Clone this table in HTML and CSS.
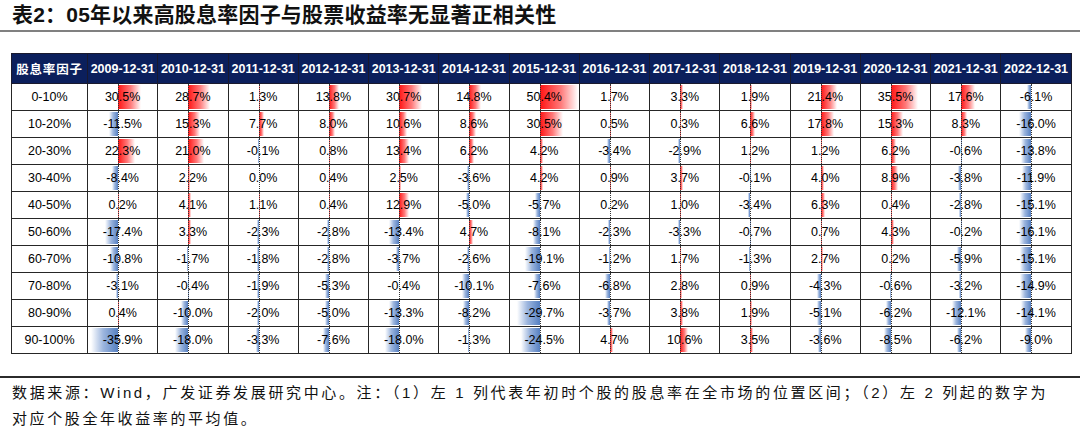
FILE: index.html
```html
<!DOCTYPE html>
<html lang="zh-CN">
<head>
<meta charset="utf-8">
<title>表2</title>
<link rel="stylesheet" href="styles.css">
</head>
<body>
<header class="title"><h1>表2：05年以来高股息率因子与股票收益率无显著正相关性</h1></header>
<section class="table-wrap">
<table class="grid">
<colgroup><col class="c0"><col class="cd"><col class="cd"><col class="cd"><col class="cd"><col class="cd"><col class="cd"><col class="cd"><col class="cd"><col class="cd"><col class="cd"><col class="cd"><col class="cd"><col class="cd"><col class="cd"></colgroup>
<thead>
<tr><th class="f">股息率因子</th><th>2009-12-31</th><th>2010-12-31</th><th>2011-12-31</th><th>2012-12-31</th><th>2013-12-31</th><th>2014-12-31</th><th>2015-12-31</th><th>2016-12-31</th><th>2017-12-31</th><th>2018-12-31</th><th>2019-12-31</th><th>2020-12-31</th><th>2021-12-31</th><th>2022-12-31</th></tr>
</thead>
<tbody>
<tr><td class="k">0-10%</td>
<td class="d"><i class="b p" style="width:23.2px"></i><span>30.5%</span></td>
<td class="d"><i class="b p" style="width:21.8px"></i><span>28.7%</span></td>
<td class="d"><i class="b p" style="width:1px"></i><span>1.3%</span></td>
<td class="d"><i class="b p" style="width:10.5px"></i><span>13.8%</span></td>
<td class="d"><i class="b p" style="width:23.3px"></i><span>30.7%</span></td>
<td class="d"><i class="b p" style="width:11.2px"></i><span>14.8%</span></td>
<td class="d"><i class="b p" style="width:38.3px"></i><span>50.4%</span></td>
<td class="d"><i class="b p" style="width:1.3px"></i><span>1.7%</span></td>
<td class="d"><i class="b p" style="width:2.5px"></i><span>3.3%</span></td>
<td class="d"><i class="b p" style="width:1.4px"></i><span>1.9%</span></td>
<td class="d"><i class="b p" style="width:16.3px"></i><span>21.4%</span></td>
<td class="d"><i class="b p" style="width:27px"></i><span>35.5%</span></td>
<td class="d"><i class="b p" style="width:13.4px"></i><span>17.6%</span></td>
<td class="d"><i class="b n" style="width:4.6px"></i><span>-6.1%</span></td></tr>
<tr><td class="k">10-20%</td>
<td class="d"><i class="b n" style="width:8.7px"></i><span>-11.5%</span></td>
<td class="d"><i class="b p" style="width:11.6px"></i><span>15.3%</span></td>
<td class="d"><i class="b p" style="width:5.9px"></i><span>7.7%</span></td>
<td class="d"><i class="b p" style="width:6.1px"></i><span>8.0%</span></td>
<td class="d"><i class="b p" style="width:8.1px"></i><span>10.6%</span></td>
<td class="d"><i class="b p" style="width:6.5px"></i><span>8.6%</span></td>
<td class="d"><i class="b p" style="width:23.2px"></i><span>30.5%</span></td>
<td class="d"><i class="b p" style="width:0.4px"></i><span>0.5%</span></td>
<td class="d"><i class="b p" style="width:0.2px"></i><span>0.3%</span></td>
<td class="d"><i class="b p" style="width:5px"></i><span>6.6%</span></td>
<td class="d"><i class="b p" style="width:13.5px"></i><span>17.8%</span></td>
<td class="d"><i class="b p" style="width:11.6px"></i><span>15.3%</span></td>
<td class="d"><i class="b p" style="width:6.3px"></i><span>8.3%</span></td>
<td class="d"><i class="b n" style="width:12.2px"></i><span>-16.0%</span></td></tr>
<tr><td class="k">20-30%</td>
<td class="d"><i class="b p" style="width:16.9px"></i><span>22.3%</span></td>
<td class="d"><i class="b p" style="width:16px"></i><span>21.0%</span></td>
<td class="d"><i class="b n" style="width:0.1px"></i><span>-0.1%</span></td>
<td class="d"><i class="b p" style="width:0.6px"></i><span>0.8%</span></td>
<td class="d"><i class="b p" style="width:10.2px"></i><span>13.4%</span></td>
<td class="d"><i class="b p" style="width:4.7px"></i><span>6.2%</span></td>
<td class="d"><i class="b p" style="width:3.2px"></i><span>4.2%</span></td>
<td class="d"><i class="b n" style="width:2.6px"></i><span>-3.4%</span></td>
<td class="d"><i class="b n" style="width:2.2px"></i><span>-2.9%</span></td>
<td class="d"><i class="b p" style="width:0.9px"></i><span>1.2%</span></td>
<td class="d"><i class="b p" style="width:0.9px"></i><span>1.2%</span></td>
<td class="d"><i class="b p" style="width:4.7px"></i><span>6.2%</span></td>
<td class="d"><i class="b n" style="width:0.5px"></i><span>-0.6%</span></td>
<td class="d"><i class="b n" style="width:10.5px"></i><span>-13.8%</span></td></tr>
<tr><td class="k">30-40%</td>
<td class="d"><i class="b n" style="width:6.4px"></i><span>-8.4%</span></td>
<td class="d"><i class="b p" style="width:1.7px"></i><span>2.2%</span></td>
<td class="d"><span>0.0%</span></td>
<td class="d"><i class="b p" style="width:0.3px"></i><span>0.4%</span></td>
<td class="d"><i class="b p" style="width:1.9px"></i><span>2.5%</span></td>
<td class="d"><i class="b n" style="width:2.7px"></i><span>-3.6%</span></td>
<td class="d"><i class="b p" style="width:3.2px"></i><span>4.2%</span></td>
<td class="d"><i class="b p" style="width:0.7px"></i><span>0.9%</span></td>
<td class="d"><i class="b p" style="width:2.8px"></i><span>3.7%</span></td>
<td class="d"><i class="b n" style="width:0.1px"></i><span>-0.1%</span></td>
<td class="d"><i class="b p" style="width:3px"></i><span>4.0%</span></td>
<td class="d"><i class="b p" style="width:6.8px"></i><span>8.9%</span></td>
<td class="d"><i class="b n" style="width:2.9px"></i><span>-3.8%</span></td>
<td class="d"><i class="b n" style="width:9px"></i><span>-11.9%</span></td></tr>
<tr><td class="k">40-50%</td>
<td class="d"><i class="b p" style="width:0.2px"></i><span>0.2%</span></td>
<td class="d"><i class="b p" style="width:3.1px"></i><span>4.1%</span></td>
<td class="d"><i class="b p" style="width:0.8px"></i><span>1.1%</span></td>
<td class="d"><i class="b p" style="width:0.3px"></i><span>0.4%</span></td>
<td class="d"><i class="b p" style="width:9.8px"></i><span>12.9%</span></td>
<td class="d"><i class="b n" style="width:3.8px"></i><span>-5.0%</span></td>
<td class="d"><i class="b n" style="width:4.3px"></i><span>-5.7%</span></td>
<td class="d"><i class="b p" style="width:0.2px"></i><span>0.2%</span></td>
<td class="d"><i class="b p" style="width:0.8px"></i><span>1.0%</span></td>
<td class="d"><i class="b n" style="width:2.6px"></i><span>-3.4%</span></td>
<td class="d"><i class="b p" style="width:4.8px"></i><span>6.3%</span></td>
<td class="d"><i class="b p" style="width:0.3px"></i><span>0.4%</span></td>
<td class="d"><i class="b n" style="width:2.1px"></i><span>-2.8%</span></td>
<td class="d"><i class="b n" style="width:11.5px"></i><span>-15.1%</span></td></tr>
<tr><td class="k">50-60%</td>
<td class="d"><i class="b n" style="width:13.2px"></i><span>-17.4%</span></td>
<td class="d"><i class="b p" style="width:2.5px"></i><span>3.3%</span></td>
<td class="d"><i class="b n" style="width:1.7px"></i><span>-2.3%</span></td>
<td class="d"><i class="b n" style="width:2.1px"></i><span>-2.8%</span></td>
<td class="d"><i class="b n" style="width:10.2px"></i><span>-13.4%</span></td>
<td class="d"><i class="b p" style="width:3.6px"></i><span>4.7%</span></td>
<td class="d"><i class="b n" style="width:6.2px"></i><span>-8.1%</span></td>
<td class="d"><i class="b n" style="width:1.7px"></i><span>-2.3%</span></td>
<td class="d"><i class="b n" style="width:2.5px"></i><span>-3.3%</span></td>
<td class="d"><i class="b n" style="width:0.5px"></i><span>-0.7%</span></td>
<td class="d"><i class="b p" style="width:0.5px"></i><span>0.7%</span></td>
<td class="d"><i class="b p" style="width:3.3px"></i><span>4.3%</span></td>
<td class="d"><i class="b n" style="width:0.2px"></i><span>-0.2%</span></td>
<td class="d"><i class="b n" style="width:12.2px"></i><span>-16.1%</span></td></tr>
<tr><td class="k">60-70%</td>
<td class="d"><i class="b n" style="width:8.2px"></i><span>-10.8%</span></td>
<td class="d"><i class="b n" style="width:1.3px"></i><span>-1.7%</span></td>
<td class="d"><i class="b n" style="width:1.4px"></i><span>-1.8%</span></td>
<td class="d"><i class="b n" style="width:2.1px"></i><span>-2.8%</span></td>
<td class="d"><i class="b n" style="width:2.8px"></i><span>-3.7%</span></td>
<td class="d"><i class="b n" style="width:2px"></i><span>-2.6%</span></td>
<td class="d"><i class="b n" style="width:14.5px"></i><span>-19.1%</span></td>
<td class="d"><i class="b n" style="width:0.9px"></i><span>-1.2%</span></td>
<td class="d"><i class="b p" style="width:1.3px"></i><span>1.7%</span></td>
<td class="d"><i class="b n" style="width:1px"></i><span>-1.3%</span></td>
<td class="d"><i class="b p" style="width:2.1px"></i><span>2.7%</span></td>
<td class="d"><i class="b p" style="width:0.2px"></i><span>0.2%</span></td>
<td class="d"><i class="b n" style="width:4.5px"></i><span>-5.9%</span></td>
<td class="d"><i class="b n" style="width:11.5px"></i><span>-15.1%</span></td></tr>
<tr><td class="k">70-80%</td>
<td class="d"><i class="b n" style="width:2.4px"></i><span>-3.1%</span></td>
<td class="d"><i class="b n" style="width:0.3px"></i><span>-0.4%</span></td>
<td class="d"><i class="b n" style="width:1.4px"></i><span>-1.9%</span></td>
<td class="d"><i class="b n" style="width:4px"></i><span>-5.3%</span></td>
<td class="d"><i class="b n" style="width:0.3px"></i><span>-0.4%</span></td>
<td class="d"><i class="b n" style="width:7.7px"></i><span>-10.1%</span></td>
<td class="d"><i class="b n" style="width:5.8px"></i><span>-7.6%</span></td>
<td class="d"><i class="b n" style="width:5.2px"></i><span>-6.8%</span></td>
<td class="d"><i class="b p" style="width:2.1px"></i><span>2.8%</span></td>
<td class="d"><i class="b p" style="width:0.7px"></i><span>0.9%</span></td>
<td class="d"><i class="b n" style="width:3.3px"></i><span>-4.3%</span></td>
<td class="d"><i class="b n" style="width:0.5px"></i><span>-0.6%</span></td>
<td class="d"><i class="b n" style="width:2.4px"></i><span>-3.2%</span></td>
<td class="d"><i class="b n" style="width:11.3px"></i><span>-14.9%</span></td></tr>
<tr><td class="k">80-90%</td>
<td class="d"><i class="b p" style="width:0.3px"></i><span>0.4%</span></td>
<td class="d"><i class="b n" style="width:7.6px"></i><span>-10.0%</span></td>
<td class="d"><i class="b n" style="width:1.5px"></i><span>-2.0%</span></td>
<td class="d"><i class="b n" style="width:3.8px"></i><span>-5.0%</span></td>
<td class="d"><i class="b n" style="width:10.1px"></i><span>-13.3%</span></td>
<td class="d"><i class="b n" style="width:6.2px"></i><span>-8.2%</span></td>
<td class="d"><i class="b n" style="width:22.6px"></i><span>-29.7%</span></td>
<td class="d"><i class="b n" style="width:2.8px"></i><span>-3.7%</span></td>
<td class="d"><i class="b p" style="width:2.9px"></i><span>3.8%</span></td>
<td class="d"><i class="b p" style="width:1.4px"></i><span>1.9%</span></td>
<td class="d"><i class="b n" style="width:3.9px"></i><span>-5.1%</span></td>
<td class="d"><i class="b n" style="width:4.7px"></i><span>-6.2%</span></td>
<td class="d"><i class="b n" style="width:9.2px"></i><span>-12.1%</span></td>
<td class="d"><i class="b n" style="width:10.7px"></i><span>-14.1%</span></td></tr>
<tr><td class="k">90-100%</td>
<td class="d"><i class="b n" style="width:27.3px"></i><span>-35.9%</span></td>
<td class="d"><i class="b n" style="width:13.7px"></i><span>-18.0%</span></td>
<td class="d"><i class="b n" style="width:2.5px"></i><span>-3.3%</span></td>
<td class="d"><i class="b n" style="width:5.8px"></i><span>-7.6%</span></td>
<td class="d"><i class="b n" style="width:13.7px"></i><span>-18.0%</span></td>
<td class="d"><i class="b n" style="width:1px"></i><span>-1.3%</span></td>
<td class="d"><i class="b n" style="width:18.6px"></i><span>-24.5%</span></td>
<td class="d"><i class="b p" style="width:3.6px"></i><span>4.7%</span></td>
<td class="d"><i class="b p" style="width:8.1px"></i><span>10.6%</span></td>
<td class="d"><i class="b p" style="width:2.7px"></i><span>3.5%</span></td>
<td class="d"><i class="b n" style="width:2.7px"></i><span>-3.6%</span></td>
<td class="d"><i class="b n" style="width:6.5px"></i><span>-8.5%</span></td>
<td class="d"><i class="b n" style="width:4.7px"></i><span>-6.2%</span></td>
<td class="d"><i class="b n" style="width:6.8px"></i><span>-9.0%</span></td></tr>
</tbody>
</table>
</section>
<footer class="note">
<p>数据来源：Wind，广发证券发展研究中心。注：（1）左 1 列代表年初时个股的股息率在全市场的位置区间；（2）左 2 列起的数字为对应个股全年收益率的平均值。</p>
</footer>
</body>
</html>
```
FILE: styles.css
```css
html, body {
  margin: 0;
  padding: 0;
  background: #fff;
}
body {
  width: 1080px;
  height: 442px;
  overflow: hidden;
  font-family: "Liberation Sans", "Noto Sans CJK SC", sans-serif;
  color: #000;
}
.title {
  height: 30px;
  border-bottom: 2px solid #808080;
  display: flex;
  align-items: center;
  padding-left: 12px;
}
.title h1 {
  margin: 0;
  font-size: 21px;
  line-height: 24px;
  font-weight: bold;
  letter-spacing: 0.2px;
  color: #111;
}
.table-wrap {
  padding: 21px 0 0 11px;
}
.grid {
  border-collapse: collapse;
  table-layout: fixed;
  width: 1060px;
  font-size: 12.5px;
}
.grid col.c0 { width: 76px; }
.grid col.cd { width: 70.28px; }
.grid th, .grid td {
  border: 1px solid #262626;
  padding: 0;
  text-align: center;
  white-space: nowrap;
  overflow: hidden;
}
.grid thead tr { height: 30px; }
.grid tbody tr { height: 27px; }
.grid th {
  background: #0b1f5c;
  color: #fff;
  font-weight: bold;
  border-color: #1a1a2e;
}
.grid th.f {
  font-size: 12.5px;
  letter-spacing: 0.8px;
}
.grid td.d {
  position: relative;
}
.grid td.d span {
  position: relative;
}
.grid td.d::after {
  content: "";
  position: absolute;
  left: 30px;
  top: 0;
  bottom: 0;
  border-left: 1px dotted #333;
}
.b {
  position: absolute;
  top: 1px;
  bottom: 1px;
}
.b.p {
  left: 30px;
  background: linear-gradient(90deg, #ff1414 0%, #ff7a7a 55%, #fff 100%);
}
.b.n {
  right: calc(100% - 30px);
  background: linear-gradient(270deg, #5680c2 0%, #9db6de 55%, #fff 100%);
}
.note {
  margin-top: 22px;
  border-top: 2px solid #2b2b2b;
}
.note p {
  margin: 0;
  padding: 2px 0 0 12px;
  width: 1036px;
  font-size: 15px;
  line-height: 26px;
  letter-spacing: 2.6px;
  text-align: justify;
  color: #111;
}
```
